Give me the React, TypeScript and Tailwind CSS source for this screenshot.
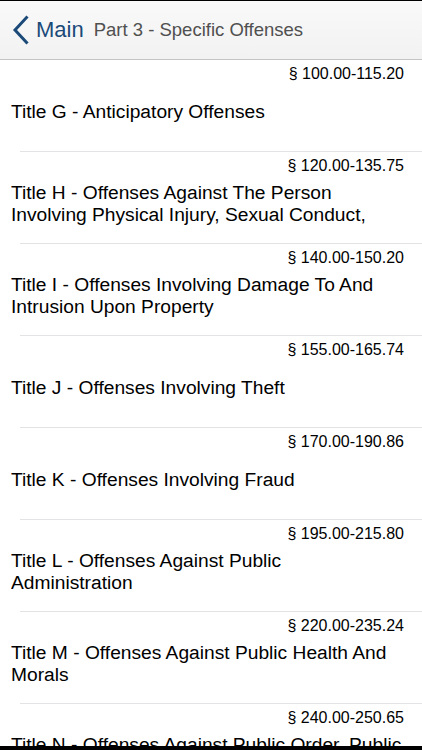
const rows = [
  { sec: "§ 100.00-115.20", title: "Title G - Anticipatory Offenses" },
  { sec: "§ 120.00-135.75", title: "Title H - Offenses Against The Person Involving Physical Injury, Sexual Conduct," },
  { sec: "§ 140.00-150.20", title: "Title I - Offenses Involving Damage To And Intrusion Upon Property" },
  { sec: "§ 155.00-165.74", title: "Title J - Offenses Involving Theft" },
  { sec: "§ 170.00-190.86", title: "Title K - Offenses Involving Fraud" },
  { sec: "§ 195.00-215.80", title: "Title L - Offenses Against Public Administration" },
  { sec: "§ 220.00-235.24", title: "Title M - Offenses Against Public Health And Morals" },
  { sec: "§ 240.00-250.65", title: "Title N - Offenses Against Public Order, Public Sensibilities And The Right To Privacy" },
];

export default function App() {
  return (
    <div className="relative h-[750px] w-[422px] overflow-hidden bg-white font-['Liberation_Sans',Arial,sans-serif] text-black">
      <header className="flex h-[60px] items-center border-t border-b border-t-black border-b-[#c4c4c6] bg-gradient-to-b from-[#f9f9f9] to-[#f2f2f3]">
        <div className="flex items-center pl-3 text-[#1b4a79]">
          <svg width="17" height="30" viewBox="0 0 17 30" fill="none">
            <path d="M14.5 2.5 L3 15 L14.5 27.5" stroke="currentColor" strokeWidth="3" strokeLinecap="square" />
          </svg>
          <span className="ml-[7px] text-[22px] leading-none">Main</span>
        </div>
        <span className="ml-[10px] text-[18.5px] leading-none text-[#505050]">Part 3 - Specific Offenses</span>
      </header>

      <ul>
        {rows.map((r, i) => (
          <li key={i} className="flex h-[92px] flex-col pl-[11px]">
            <div className="flex h-6 justify-end pt-[4px] pr-[18px] text-[16px] leading-5">{r.sec}</div>
            <div className="flex flex-1 items-center pr-4 text-[19.2px] leading-[22px]">
              <p className="line-clamp-2">{r.title}</p>
            </div>
            <div className="h-[12px]" />
            <div className="ml-[9px] h-px bg-[#e3e3e5]" />
          </li>
        ))}
      </ul>

      <div className="absolute right-0 bottom-0 left-0 h-[4px] bg-black" />
    </div>
  );
}
